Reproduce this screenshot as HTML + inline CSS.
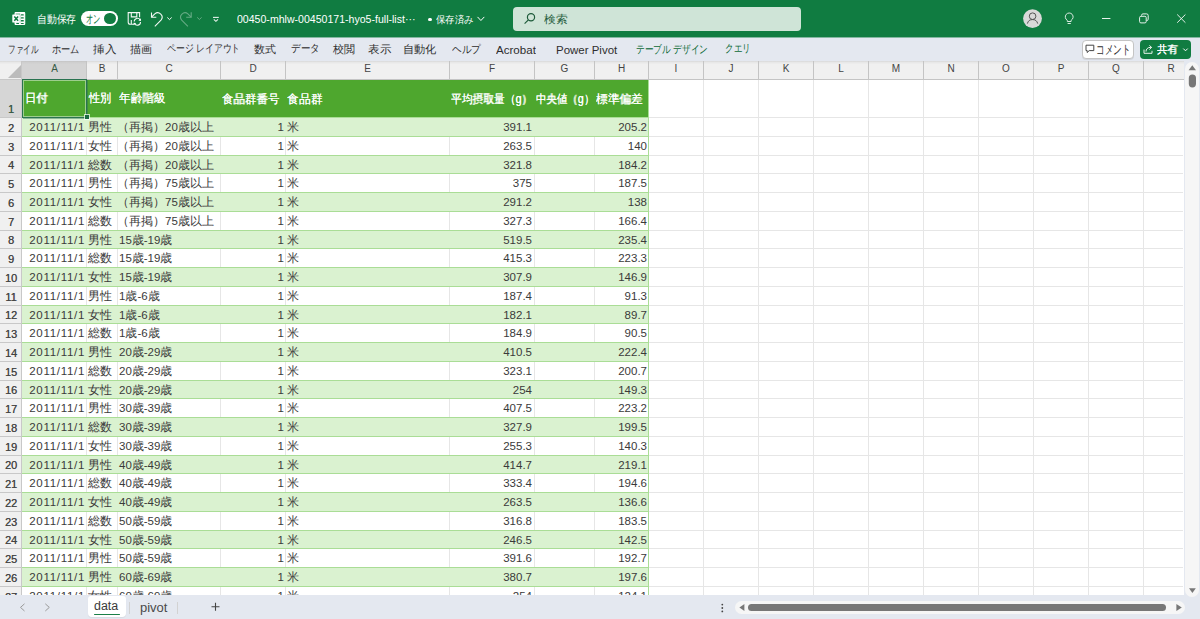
<!DOCTYPE html><html><head><meta charset="utf-8"><style>*{box-sizing:border-box;margin:0;padding:0}
html,body{width:1200px;height:619px;overflow:hidden;background:#e4e8f0;font-family:"Liberation Sans",sans-serif;position:relative}
div,span{position:absolute}
#title{left:0;top:0;width:1200px;height:37px;background:#107c41;color:#fff}
#ribbon{left:0;top:37px;width:1200px;height:24px;background:#e4e8f0;box-shadow:inset 0 1px 0 rgba(16,124,65,0.45)}
.tab{top:6px;font-size:12px;color:#404040;white-space:nowrap;line-height:14px}
.tab.g{color:#107c41}
#grid{left:0;top:0;width:1200px;height:619px}
.colhdr{background:linear-gradient(#d8d8d8 0,#e8e8e8 1.5px,#f0f0f0 3.5px);border-bottom:1px solid #c4c4c4}
.colsel{background:linear-gradient(#c4c4c4 0,#cfcfcf 1.5px,#d4d4d4 3.5px);border-bottom:1px solid #c4c4c4}
.corner{left:0;top:61px;width:22px;height:19px;background:linear-gradient(#d8d8d8 0,#e8e8e8 1.5px,#f0f0f0 3.5px);border-right:1px solid #c8c8c8;border-bottom:1px solid #c8c8c8}
.corner:after{content:"";position:absolute;right:0px;bottom:1px;width:0;height:0;border-left:13px solid transparent;border-bottom:13px solid #bcbcbc}
.cl{top:61px;height:18px;text-align:center;font-size:10px;line-height:15px;color:#444;padding-left:1px}
.cl.sel{color:#345a45}
.chl{top:61px;width:1px;height:18px;background:#c4c4c4}
.rowhdr{background:#f0f0f0;border-right:1px solid #c8c8c8}
.rowsel{background:#d6d6d6;border-right:1px solid #c8c8c8}
.rhl{left:0;width:22px;height:1px;background:#c8c8c8}
.rn{left:0;width:22px;text-align:center;font-size:11px;color:#444;text-shadow:0.3px 0 0 #666;display:flex;align-items:flex-end;justify-content:center;padding-bottom:2px;line-height:12px}
.rn.sel{color:#345a45}
.sheet{background:#fff}
.vg{width:1px;background:#e6e6e6}
.hg{left:22px;width:1161px;height:1px;background:#e6e6e6}
.thead{background:#4ea72e}
.band{background:#daf2d0}
.tb{height:1px;background:#aadd96}
.tr{width:1px;background:#aadd96}
.ht{top:79px;height:38px;color:#fff;font-weight:bold;font-size:12px;line-height:38px;padding:0 2px;white-space:nowrap}
.tt{white-space:nowrap;color:#fff}
.c{font-size:11.5px;color:#3a3a3a;white-space:nowrap;line-height:14px;padding:3px 1px 0 2px}
.c.d{letter-spacing:0.7px;padding-right:1px}
.c.p{margin-left:-2px}
.c.h{padding-right:1px}
.c.f{padding-right:2px}
.l{text-align:left}.r{text-align:right}
.selbox{left:22px;top:79px;width:65px;height:39px;border:1px solid #2a7350;box-shadow:inset 0 0 0 1px rgba(255,255,255,0.45),1px 1px 0 rgba(42,115,80,0.45)}
.handle{left:84.5px;top:115px;width:4px;height:4px;background:#1a6b40;box-shadow:0 0 0 1px rgba(255,255,255,0.7)}
#bottom{left:0;top:595px;width:1200px;height:24px;background:#e4e8f0}
</style></head><body>
<div id="title">
 <div style="left:513px;top:7px;width:288px;height:24px;background:#cfe4d7;border-radius:4px"></div>
 <svg style="position:absolute;left:0;top:0" width="1200" height="37" viewBox="0 0 1200 37">
  <!-- excel icon -->
  <rect x="15.1" y="12.6" width="9.6" height="11.9" rx="0.6" fill="none" stroke="#fff" stroke-width="1.1"/>
  <rect x="15" y="12.1" width="10" height="2.6" fill="#fff" opacity="0.55"/>
  <rect x="20.2" y="12.6" width="4.5" height="12" fill="#fff"/>
  <rect x="15" y="22.2" width="5.5" height="2.4" fill="#fff"/>
  <g fill="#107c41"><rect x="20.9" y="14.3" width="2.9" height="1.3" rx="0.5"/><rect x="20.9" y="17.2" width="2.9" height="1.3" rx="0.5"/><rect x="20.9" y="20.1" width="2.9" height="1.3" rx="0.5"/><rect x="20.9" y="22.9" width="2.9" height="1.1" rx="0.5"/><rect x="16.2" y="22.9" width="2.9" height="1.1" rx="0.5"/></g>
  <rect x="12.3" y="14.6" width="7.6" height="8" rx="0.5" fill="#fff"/>
  <path d="M14.3 16.4l3.8 4.4M18.1 16.4l-3.8 4.4" stroke="#107c41" stroke-width="1.5"/>
  <!-- save icon -->
  <g fill="none" stroke="#fff" stroke-width="1.1" opacity="0.95">
   <path d="M134 24.2h-3.8a2 2 0 0 1-2-2v-9.6h11.4v4.6"/>
   <path d="M131.3 12.6v4.3h5.5v-4.3"/>
   <path d="M131.3 24v-4"/>
   <path d="M134.2 21.5a3.2 3.2 0 0 1 6-1.5"/>
   <path d="M140.5 22a3.2 3.2 0 0 1-6 1.6"/>
  </g>
  <path d="M140.8 18.3l0.2 2.6-2.6-0.3z" fill="#fff"/>
  <path d="M133.8 25.3l-0.2-2.6 2.6 0.3z" fill="#fff"/>
  <!-- undo -->
  <g fill="none" stroke="#fff" stroke-width="1.1" opacity="0.95">
   <path d="M151.5 12.4v4.8h4.8"/>
   <path d="M151.8 16.9l3-3a4.4 4.4 0 0 1 6.2 6.2l-6.2 6.2" />
   <path d="M167.3 17.5l2.2 2.1 2.2-2.1" stroke-width="1"/>
  </g>
  <!-- redo dim -->
  <g fill="none" stroke="#fff" stroke-width="1.1" opacity="0.35">
   <path d="M191.2 12.2v5h-5"/>
   <path d="M190.9 16.9l-3-3a4.4 4.4 0 0 0 -6.2 6.2l6.2 6.2"/>
   <path d="M197.2 17.4l2.2 2.1 2.2-2.1" stroke-width="1"/>
  </g>
  <!-- customize -->
  <g fill="none" stroke="#fff" stroke-width="1.1" opacity="0.9">
   <path d="M213 17.4h5.8"/>
   <path d="M213.8 19.3l2.1 2 2.1-2"/>
  </g>
  <!-- saved chevron -->
  <path d="M477.5 16.9l3.4 3.6 3.4-3.6" fill="none" stroke="#fff" stroke-width="1"/>
  <!-- search icon -->
  <g fill="none" stroke="#1e5b3a" stroke-width="1.2"><circle cx="531" cy="17.2" r="3.6"/><path d="M528.4 19.9l-3.8 3.8"/></g>
  <!-- avatar -->
  <circle cx="1032.5" cy="18.6" r="9.4" fill="#d9d9d9"/>
  <g fill="none" stroke="#555" stroke-width="1"><circle cx="1032.6" cy="16.2" r="3.3"/><path d="M1027.4 23.6a5.3 5.3 0 0 1 10.3 0"/></g>
  <!-- lightbulb -->
  <g fill="none" stroke="#fff" stroke-width="1" opacity="0.85"><path d="M1067.3 21.5v-1.2a3.9 3.9 0 1 1 3.8 0v1.2z"/><path d="M1067.6 23.5h3.2"/></g>
  <!-- min -->
  <path d="M1102 18.5h8.4" stroke="#fff" stroke-width="1" opacity="0.9"/>
  <!-- restore -->
  <g fill="none" stroke="#fff" stroke-width="1" opacity="0.9"><rect x="1139.6" y="16.3" width="6.6" height="6.6" rx="1.3"/><path d="M1141.5 15.8v-0.4a1.5 1.5 0 0 1 1.5-1.5h3.6a1.6 1.6 0 0 1 1.6 1.6v3.6a1.5 1.5 0 0 1-1.5 1.5h-0.3"/></g>
  <!-- close -->
  <path d="M1177.2 14.5l8.2 8.2M1185.4 14.5l-8.2 8.2" stroke="#fff" stroke-width="1" opacity="0.9"/>
 </svg>
 <div style="left:81px;top:10.5px;width:37px;height:15.5px;background:#fff;border-radius:8px"><div style="left:23.2px;top:2.2px;width:11.6px;height:11px;border-radius:6px;background:#107c41"></div></div>
 <div style="left:428px;top:17.5px;width:3.5px;height:3.5px;border-radius:50%;background:#fff"></div>
</div>

<div id="ribbon">
 <div style="left:1082px;top:3px;width:52px;height:19px;background:#fff;border:1px solid #c4c4c4;border-radius:4px;box-shadow:0 1px 0 rgba(0,0,0,0.08)"></div>
 <svg style="position:absolute;left:0;top:0" width="1200" height="24" viewBox="0 37 1200 24">
  <path d="M1086 45.2h7.8v5.4h-4.6l-2 1.9v-1.9h-1.2z" fill="none" stroke="#444" stroke-width="1"/>
 </svg>
 <div style="left:1140px;top:3px;width:51px;height:19px;background:#107c41;border-radius:4px"></div>
 <svg style="position:absolute;left:0;top:0" width="1200" height="24" viewBox="0 37 1200 24">
  <g fill="none" stroke="#fff" stroke-width="1" opacity="0.9">
   <path d="M1144 49.5v3.8h8v-2.5"/>
   <path d="M1146 51.6a4 4 0 0 1 4-4.2h1.6l-2.2-2"/><path d="M1151.6 47.4l-2.2 2.1"/>
  </g>
  <path d="M1183.3 48.6l2.2 2.2 2.2-2.2" fill="none" stroke="#fff" stroke-width="1"/>
 </svg>
</div>

<div id="grid">
<div class="colhdr" style="left:0;top:61px;width:1184px;height:19px"></div>
<div class="corner"></div>
<div class="colsel" style="left:22px;top:61px;width:64px;height:19px"></div>
<div class="cl sel" style="left:22px;width:64px">A</div>
<div class="cl" style="left:86px;width:31px">B</div>
<div class="chl" style="left:86px"></div>
<div class="cl" style="left:117px;width:103px">C</div>
<div class="chl" style="left:117px"></div>
<div class="cl" style="left:220px;width:65px">D</div>
<div class="chl" style="left:220px"></div>
<div class="cl" style="left:285px;width:164px">E</div>
<div class="chl" style="left:285px"></div>
<div class="cl" style="left:449px;width:85px">F</div>
<div class="chl" style="left:449px"></div>
<div class="cl" style="left:534px;width:60px">G</div>
<div class="chl" style="left:534px"></div>
<div class="cl" style="left:594px;width:54px">H</div>
<div class="chl" style="left:594px"></div>
<div class="cl" style="left:648px;width:55px">I</div>
<div class="chl" style="left:648px"></div>
<div class="cl" style="left:703px;width:55px">J</div>
<div class="chl" style="left:703px"></div>
<div class="cl" style="left:758px;width:55px">K</div>
<div class="chl" style="left:758px"></div>
<div class="cl" style="left:813px;width:55px">L</div>
<div class="chl" style="left:813px"></div>
<div class="cl" style="left:868px;width:55px">M</div>
<div class="chl" style="left:868px"></div>
<div class="cl" style="left:923px;width:55px">N</div>
<div class="chl" style="left:923px"></div>
<div class="cl" style="left:978px;width:55px">O</div>
<div class="chl" style="left:978px"></div>
<div class="cl" style="left:1033px;width:55px">P</div>
<div class="chl" style="left:1033px"></div>
<div class="cl" style="left:1088px;width:55px">Q</div>
<div class="chl" style="left:1088px"></div>
<div class="cl" style="left:1143px;width:55px">R</div>
<div class="chl" style="left:1143px"></div>
<div class="rowhdr" style="left:0;top:80px;width:22px;height:515px"></div>
<div class="rowsel" style="left:0;top:80px;width:22px;height:37px"></div>
<div class="sheet" style="left:22px;top:80px;width:1162px;height:515px"></div>
<div class="vg" style="left:86px;top:80px;height:515px"></div>
<div class="vg" style="left:117px;top:80px;height:515px"></div>
<div class="vg" style="left:220px;top:80px;height:515px"></div>
<div class="vg" style="left:285px;top:80px;height:515px"></div>
<div class="vg" style="left:449px;top:80px;height:515px"></div>
<div class="vg" style="left:534px;top:80px;height:515px"></div>
<div class="vg" style="left:594px;top:80px;height:515px"></div>
<div class="vg" style="left:648px;top:80px;height:515px"></div>
<div class="vg" style="left:703px;top:80px;height:515px"></div>
<div class="vg" style="left:758px;top:80px;height:515px"></div>
<div class="vg" style="left:813px;top:80px;height:515px"></div>
<div class="vg" style="left:868px;top:80px;height:515px"></div>
<div class="vg" style="left:923px;top:80px;height:515px"></div>
<div class="vg" style="left:978px;top:80px;height:515px"></div>
<div class="vg" style="left:1033px;top:80px;height:515px"></div>
<div class="vg" style="left:1088px;top:80px;height:515px"></div>
<div class="vg" style="left:1143px;top:80px;height:515px"></div>
<div class="hg" style="top:117.00px"></div>
<div class="rhl" style="top:117.00px"></div>
<div class="hg" style="top:135.75px"></div>
<div class="rhl" style="top:135.75px"></div>
<div class="hg" style="top:154.50px"></div>
<div class="rhl" style="top:154.50px"></div>
<div class="hg" style="top:173.25px"></div>
<div class="rhl" style="top:173.25px"></div>
<div class="hg" style="top:192.00px"></div>
<div class="rhl" style="top:192.00px"></div>
<div class="hg" style="top:210.75px"></div>
<div class="rhl" style="top:210.75px"></div>
<div class="hg" style="top:229.50px"></div>
<div class="rhl" style="top:229.50px"></div>
<div class="hg" style="top:248.25px"></div>
<div class="rhl" style="top:248.25px"></div>
<div class="hg" style="top:267.00px"></div>
<div class="rhl" style="top:267.00px"></div>
<div class="hg" style="top:285.75px"></div>
<div class="rhl" style="top:285.75px"></div>
<div class="hg" style="top:304.50px"></div>
<div class="rhl" style="top:304.50px"></div>
<div class="hg" style="top:323.25px"></div>
<div class="rhl" style="top:323.25px"></div>
<div class="hg" style="top:342.00px"></div>
<div class="rhl" style="top:342.00px"></div>
<div class="hg" style="top:360.75px"></div>
<div class="rhl" style="top:360.75px"></div>
<div class="hg" style="top:379.50px"></div>
<div class="rhl" style="top:379.50px"></div>
<div class="hg" style="top:398.25px"></div>
<div class="rhl" style="top:398.25px"></div>
<div class="hg" style="top:417.00px"></div>
<div class="rhl" style="top:417.00px"></div>
<div class="hg" style="top:435.75px"></div>
<div class="rhl" style="top:435.75px"></div>
<div class="hg" style="top:454.50px"></div>
<div class="rhl" style="top:454.50px"></div>
<div class="hg" style="top:473.25px"></div>
<div class="rhl" style="top:473.25px"></div>
<div class="hg" style="top:492.00px"></div>
<div class="rhl" style="top:492.00px"></div>
<div class="hg" style="top:510.75px"></div>
<div class="rhl" style="top:510.75px"></div>
<div class="hg" style="top:529.50px"></div>
<div class="rhl" style="top:529.50px"></div>
<div class="hg" style="top:548.25px"></div>
<div class="rhl" style="top:548.25px"></div>
<div class="hg" style="top:567.00px"></div>
<div class="rhl" style="top:567.00px"></div>
<div class="hg" style="top:585.75px"></div>
<div class="rhl" style="top:585.75px"></div>
<div class="rn sel" style="top:80px;height:37px">1</div>
<div class="rn" style="top:117.00px;height:18.75px">2</div>
<div class="rn" style="top:135.75px;height:18.75px">3</div>
<div class="rn" style="top:154.50px;height:18.75px">4</div>
<div class="rn" style="top:173.25px;height:18.75px">5</div>
<div class="rn" style="top:192.00px;height:18.75px">6</div>
<div class="rn" style="top:210.75px;height:18.75px">7</div>
<div class="rn" style="top:229.50px;height:18.75px">8</div>
<div class="rn" style="top:248.25px;height:18.75px">9</div>
<div class="rn" style="top:267.00px;height:18.75px">10</div>
<div class="rn" style="top:285.75px;height:18.75px">11</div>
<div class="rn" style="top:304.50px;height:18.75px">12</div>
<div class="rn" style="top:323.25px;height:18.75px">13</div>
<div class="rn" style="top:342.00px;height:18.75px">14</div>
<div class="rn" style="top:360.75px;height:18.75px">15</div>
<div class="rn" style="top:379.50px;height:18.75px">16</div>
<div class="rn" style="top:398.25px;height:18.75px">17</div>
<div class="rn" style="top:417.00px;height:18.75px">18</div>
<div class="rn" style="top:435.75px;height:18.75px">19</div>
<div class="rn" style="top:454.50px;height:18.75px">20</div>
<div class="rn" style="top:473.25px;height:18.75px">21</div>
<div class="rn" style="top:492.00px;height:18.75px">22</div>
<div class="rn" style="top:510.75px;height:18.75px">23</div>
<div class="rn" style="top:529.50px;height:18.75px">24</div>
<div class="rn" style="top:548.25px;height:18.75px">25</div>
<div class="rn" style="top:567.00px;height:18.75px">26</div>
<div class="rn" style="top:585.75px;height:18.75px">27</div>
<div class="thead" style="left:22px;top:80px;width:626px;height:37px"></div>
<div class="band" style="left:22px;top:117.00px;width:626px;height:18.75px"></div>
<div class="band" style="left:22px;top:154.50px;width:626px;height:18.75px"></div>
<div class="band" style="left:22px;top:192.00px;width:626px;height:18.75px"></div>
<div class="band" style="left:22px;top:229.50px;width:626px;height:18.75px"></div>
<div class="band" style="left:22px;top:267.00px;width:626px;height:18.75px"></div>
<div class="band" style="left:22px;top:304.50px;width:626px;height:18.75px"></div>
<div class="band" style="left:22px;top:342.00px;width:626px;height:18.75px"></div>
<div class="band" style="left:22px;top:379.50px;width:626px;height:18.75px"></div>
<div class="band" style="left:22px;top:417.00px;width:626px;height:18.75px"></div>
<div class="band" style="left:22px;top:454.50px;width:626px;height:18.75px"></div>
<div class="band" style="left:22px;top:492.00px;width:626px;height:18.75px"></div>
<div class="band" style="left:22px;top:529.50px;width:626px;height:18.75px"></div>
<div class="band" style="left:22px;top:567.00px;width:626px;height:18.75px"></div>
<div class="tb" style="left:22px;top:117.00px;width:626px"></div>
<div class="tb" style="left:22px;top:135.75px;width:626px"></div>
<div class="tb" style="left:22px;top:154.50px;width:626px"></div>
<div class="tb" style="left:22px;top:173.25px;width:626px"></div>
<div class="tb" style="left:22px;top:192.00px;width:626px"></div>
<div class="tb" style="left:22px;top:210.75px;width:626px"></div>
<div class="tb" style="left:22px;top:229.50px;width:626px"></div>
<div class="tb" style="left:22px;top:248.25px;width:626px"></div>
<div class="tb" style="left:22px;top:267.00px;width:626px"></div>
<div class="tb" style="left:22px;top:285.75px;width:626px"></div>
<div class="tb" style="left:22px;top:304.50px;width:626px"></div>
<div class="tb" style="left:22px;top:323.25px;width:626px"></div>
<div class="tb" style="left:22px;top:342.00px;width:626px"></div>
<div class="tb" style="left:22px;top:360.75px;width:626px"></div>
<div class="tb" style="left:22px;top:379.50px;width:626px"></div>
<div class="tb" style="left:22px;top:398.25px;width:626px"></div>
<div class="tb" style="left:22px;top:417.00px;width:626px"></div>
<div class="tb" style="left:22px;top:435.75px;width:626px"></div>
<div class="tb" style="left:22px;top:454.50px;width:626px"></div>
<div class="tb" style="left:22px;top:473.25px;width:626px"></div>
<div class="tb" style="left:22px;top:492.00px;width:626px"></div>
<div class="tb" style="left:22px;top:510.75px;width:626px"></div>
<div class="tb" style="left:22px;top:529.50px;width:626px"></div>
<div class="tb" style="left:22px;top:548.25px;width:626px"></div>
<div class="tb" style="left:22px;top:567.00px;width:626px"></div>
<div class="tb" style="left:22px;top:585.75px;width:626px"></div>
<div class="tb" style="left:22px;top:604.50px;width:626px"></div>
<div class="tr" style="left:648px;top:80px;height:515px"></div>
<div class="c r d" style="right:1114px;top:117.00px;height:18.75px">2011/11/1</div>
<div class="c l" style="left:86px;top:117.00px;height:18.75px">男性</div>
<div class="c l p" style="left:117px;top:117.00px;height:18.75px">（再掲）20歳以上</div>
<div class="c r" style="right:915px;top:117.00px;height:18.75px">1</div>
<div class="c l" style="left:285px;top:117.00px;height:18.75px">米</div>
<div class="c r f" style="right:666px;top:117.00px;height:18.75px">391.1</div>
<div class="c r h" style="right:552px;top:117.00px;height:18.75px">205.2</div>
<div class="c r d" style="right:1114px;top:135.75px;height:18.75px">2011/11/1</div>
<div class="c l" style="left:86px;top:135.75px;height:18.75px">女性</div>
<div class="c l p" style="left:117px;top:135.75px;height:18.75px">（再掲）20歳以上</div>
<div class="c r" style="right:915px;top:135.75px;height:18.75px">1</div>
<div class="c l" style="left:285px;top:135.75px;height:18.75px">米</div>
<div class="c r f" style="right:666px;top:135.75px;height:18.75px">263.5</div>
<div class="c r h" style="right:552px;top:135.75px;height:18.75px">140</div>
<div class="c r d" style="right:1114px;top:154.50px;height:18.75px">2011/11/1</div>
<div class="c l" style="left:86px;top:154.50px;height:18.75px">総数</div>
<div class="c l p" style="left:117px;top:154.50px;height:18.75px">（再掲）20歳以上</div>
<div class="c r" style="right:915px;top:154.50px;height:18.75px">1</div>
<div class="c l" style="left:285px;top:154.50px;height:18.75px">米</div>
<div class="c r f" style="right:666px;top:154.50px;height:18.75px">321.8</div>
<div class="c r h" style="right:552px;top:154.50px;height:18.75px">184.2</div>
<div class="c r d" style="right:1114px;top:173.25px;height:18.75px">2011/11/1</div>
<div class="c l" style="left:86px;top:173.25px;height:18.75px">男性</div>
<div class="c l p" style="left:117px;top:173.25px;height:18.75px">（再掲）75歳以上</div>
<div class="c r" style="right:915px;top:173.25px;height:18.75px">1</div>
<div class="c l" style="left:285px;top:173.25px;height:18.75px">米</div>
<div class="c r f" style="right:666px;top:173.25px;height:18.75px">375</div>
<div class="c r h" style="right:552px;top:173.25px;height:18.75px">187.5</div>
<div class="c r d" style="right:1114px;top:192.00px;height:18.75px">2011/11/1</div>
<div class="c l" style="left:86px;top:192.00px;height:18.75px">女性</div>
<div class="c l p" style="left:117px;top:192.00px;height:18.75px">（再掲）75歳以上</div>
<div class="c r" style="right:915px;top:192.00px;height:18.75px">1</div>
<div class="c l" style="left:285px;top:192.00px;height:18.75px">米</div>
<div class="c r f" style="right:666px;top:192.00px;height:18.75px">291.2</div>
<div class="c r h" style="right:552px;top:192.00px;height:18.75px">138</div>
<div class="c r d" style="right:1114px;top:210.75px;height:18.75px">2011/11/1</div>
<div class="c l" style="left:86px;top:210.75px;height:18.75px">総数</div>
<div class="c l p" style="left:117px;top:210.75px;height:18.75px">（再掲）75歳以上</div>
<div class="c r" style="right:915px;top:210.75px;height:18.75px">1</div>
<div class="c l" style="left:285px;top:210.75px;height:18.75px">米</div>
<div class="c r f" style="right:666px;top:210.75px;height:18.75px">327.3</div>
<div class="c r h" style="right:552px;top:210.75px;height:18.75px">166.4</div>
<div class="c r d" style="right:1114px;top:229.50px;height:18.75px">2011/11/1</div>
<div class="c l" style="left:86px;top:229.50px;height:18.75px">男性</div>
<div class="c l" style="left:117px;top:229.50px;height:18.75px">15歳-19歳</div>
<div class="c r" style="right:915px;top:229.50px;height:18.75px">1</div>
<div class="c l" style="left:285px;top:229.50px;height:18.75px">米</div>
<div class="c r f" style="right:666px;top:229.50px;height:18.75px">519.5</div>
<div class="c r h" style="right:552px;top:229.50px;height:18.75px">235.4</div>
<div class="c r d" style="right:1114px;top:248.25px;height:18.75px">2011/11/1</div>
<div class="c l" style="left:86px;top:248.25px;height:18.75px">総数</div>
<div class="c l" style="left:117px;top:248.25px;height:18.75px">15歳-19歳</div>
<div class="c r" style="right:915px;top:248.25px;height:18.75px">1</div>
<div class="c l" style="left:285px;top:248.25px;height:18.75px">米</div>
<div class="c r f" style="right:666px;top:248.25px;height:18.75px">415.3</div>
<div class="c r h" style="right:552px;top:248.25px;height:18.75px">223.3</div>
<div class="c r d" style="right:1114px;top:267.00px;height:18.75px">2011/11/1</div>
<div class="c l" style="left:86px;top:267.00px;height:18.75px">女性</div>
<div class="c l" style="left:117px;top:267.00px;height:18.75px">15歳-19歳</div>
<div class="c r" style="right:915px;top:267.00px;height:18.75px">1</div>
<div class="c l" style="left:285px;top:267.00px;height:18.75px">米</div>
<div class="c r f" style="right:666px;top:267.00px;height:18.75px">307.9</div>
<div class="c r h" style="right:552px;top:267.00px;height:18.75px">146.9</div>
<div class="c r d" style="right:1114px;top:285.75px;height:18.75px">2011/11/1</div>
<div class="c l" style="left:86px;top:285.75px;height:18.75px">男性</div>
<div class="c l" style="left:117px;top:285.75px;height:18.75px">1歳-6歳</div>
<div class="c r" style="right:915px;top:285.75px;height:18.75px">1</div>
<div class="c l" style="left:285px;top:285.75px;height:18.75px">米</div>
<div class="c r f" style="right:666px;top:285.75px;height:18.75px">187.4</div>
<div class="c r h" style="right:552px;top:285.75px;height:18.75px">91.3</div>
<div class="c r d" style="right:1114px;top:304.50px;height:18.75px">2011/11/1</div>
<div class="c l" style="left:86px;top:304.50px;height:18.75px">女性</div>
<div class="c l" style="left:117px;top:304.50px;height:18.75px">1歳-6歳</div>
<div class="c r" style="right:915px;top:304.50px;height:18.75px">1</div>
<div class="c l" style="left:285px;top:304.50px;height:18.75px">米</div>
<div class="c r f" style="right:666px;top:304.50px;height:18.75px">182.1</div>
<div class="c r h" style="right:552px;top:304.50px;height:18.75px">89.7</div>
<div class="c r d" style="right:1114px;top:323.25px;height:18.75px">2011/11/1</div>
<div class="c l" style="left:86px;top:323.25px;height:18.75px">総数</div>
<div class="c l" style="left:117px;top:323.25px;height:18.75px">1歳-6歳</div>
<div class="c r" style="right:915px;top:323.25px;height:18.75px">1</div>
<div class="c l" style="left:285px;top:323.25px;height:18.75px">米</div>
<div class="c r f" style="right:666px;top:323.25px;height:18.75px">184.9</div>
<div class="c r h" style="right:552px;top:323.25px;height:18.75px">90.5</div>
<div class="c r d" style="right:1114px;top:342.00px;height:18.75px">2011/11/1</div>
<div class="c l" style="left:86px;top:342.00px;height:18.75px">男性</div>
<div class="c l" style="left:117px;top:342.00px;height:18.75px">20歳-29歳</div>
<div class="c r" style="right:915px;top:342.00px;height:18.75px">1</div>
<div class="c l" style="left:285px;top:342.00px;height:18.75px">米</div>
<div class="c r f" style="right:666px;top:342.00px;height:18.75px">410.5</div>
<div class="c r h" style="right:552px;top:342.00px;height:18.75px">222.4</div>
<div class="c r d" style="right:1114px;top:360.75px;height:18.75px">2011/11/1</div>
<div class="c l" style="left:86px;top:360.75px;height:18.75px">総数</div>
<div class="c l" style="left:117px;top:360.75px;height:18.75px">20歳-29歳</div>
<div class="c r" style="right:915px;top:360.75px;height:18.75px">1</div>
<div class="c l" style="left:285px;top:360.75px;height:18.75px">米</div>
<div class="c r f" style="right:666px;top:360.75px;height:18.75px">323.1</div>
<div class="c r h" style="right:552px;top:360.75px;height:18.75px">200.7</div>
<div class="c r d" style="right:1114px;top:379.50px;height:18.75px">2011/11/1</div>
<div class="c l" style="left:86px;top:379.50px;height:18.75px">女性</div>
<div class="c l" style="left:117px;top:379.50px;height:18.75px">20歳-29歳</div>
<div class="c r" style="right:915px;top:379.50px;height:18.75px">1</div>
<div class="c l" style="left:285px;top:379.50px;height:18.75px">米</div>
<div class="c r f" style="right:666px;top:379.50px;height:18.75px">254</div>
<div class="c r h" style="right:552px;top:379.50px;height:18.75px">149.3</div>
<div class="c r d" style="right:1114px;top:398.25px;height:18.75px">2011/11/1</div>
<div class="c l" style="left:86px;top:398.25px;height:18.75px">男性</div>
<div class="c l" style="left:117px;top:398.25px;height:18.75px">30歳-39歳</div>
<div class="c r" style="right:915px;top:398.25px;height:18.75px">1</div>
<div class="c l" style="left:285px;top:398.25px;height:18.75px">米</div>
<div class="c r f" style="right:666px;top:398.25px;height:18.75px">407.5</div>
<div class="c r h" style="right:552px;top:398.25px;height:18.75px">223.2</div>
<div class="c r d" style="right:1114px;top:417.00px;height:18.75px">2011/11/1</div>
<div class="c l" style="left:86px;top:417.00px;height:18.75px">総数</div>
<div class="c l" style="left:117px;top:417.00px;height:18.75px">30歳-39歳</div>
<div class="c r" style="right:915px;top:417.00px;height:18.75px">1</div>
<div class="c l" style="left:285px;top:417.00px;height:18.75px">米</div>
<div class="c r f" style="right:666px;top:417.00px;height:18.75px">327.9</div>
<div class="c r h" style="right:552px;top:417.00px;height:18.75px">199.5</div>
<div class="c r d" style="right:1114px;top:435.75px;height:18.75px">2011/11/1</div>
<div class="c l" style="left:86px;top:435.75px;height:18.75px">女性</div>
<div class="c l" style="left:117px;top:435.75px;height:18.75px">30歳-39歳</div>
<div class="c r" style="right:915px;top:435.75px;height:18.75px">1</div>
<div class="c l" style="left:285px;top:435.75px;height:18.75px">米</div>
<div class="c r f" style="right:666px;top:435.75px;height:18.75px">255.3</div>
<div class="c r h" style="right:552px;top:435.75px;height:18.75px">140.3</div>
<div class="c r d" style="right:1114px;top:454.50px;height:18.75px">2011/11/1</div>
<div class="c l" style="left:86px;top:454.50px;height:18.75px">男性</div>
<div class="c l" style="left:117px;top:454.50px;height:18.75px">40歳-49歳</div>
<div class="c r" style="right:915px;top:454.50px;height:18.75px">1</div>
<div class="c l" style="left:285px;top:454.50px;height:18.75px">米</div>
<div class="c r f" style="right:666px;top:454.50px;height:18.75px">414.7</div>
<div class="c r h" style="right:552px;top:454.50px;height:18.75px">219.1</div>
<div class="c r d" style="right:1114px;top:473.25px;height:18.75px">2011/11/1</div>
<div class="c l" style="left:86px;top:473.25px;height:18.75px">総数</div>
<div class="c l" style="left:117px;top:473.25px;height:18.75px">40歳-49歳</div>
<div class="c r" style="right:915px;top:473.25px;height:18.75px">1</div>
<div class="c l" style="left:285px;top:473.25px;height:18.75px">米</div>
<div class="c r f" style="right:666px;top:473.25px;height:18.75px">333.4</div>
<div class="c r h" style="right:552px;top:473.25px;height:18.75px">194.6</div>
<div class="c r d" style="right:1114px;top:492.00px;height:18.75px">2011/11/1</div>
<div class="c l" style="left:86px;top:492.00px;height:18.75px">女性</div>
<div class="c l" style="left:117px;top:492.00px;height:18.75px">40歳-49歳</div>
<div class="c r" style="right:915px;top:492.00px;height:18.75px">1</div>
<div class="c l" style="left:285px;top:492.00px;height:18.75px">米</div>
<div class="c r f" style="right:666px;top:492.00px;height:18.75px">263.5</div>
<div class="c r h" style="right:552px;top:492.00px;height:18.75px">136.6</div>
<div class="c r d" style="right:1114px;top:510.75px;height:18.75px">2011/11/1</div>
<div class="c l" style="left:86px;top:510.75px;height:18.75px">総数</div>
<div class="c l" style="left:117px;top:510.75px;height:18.75px">50歳-59歳</div>
<div class="c r" style="right:915px;top:510.75px;height:18.75px">1</div>
<div class="c l" style="left:285px;top:510.75px;height:18.75px">米</div>
<div class="c r f" style="right:666px;top:510.75px;height:18.75px">316.8</div>
<div class="c r h" style="right:552px;top:510.75px;height:18.75px">183.5</div>
<div class="c r d" style="right:1114px;top:529.50px;height:18.75px">2011/11/1</div>
<div class="c l" style="left:86px;top:529.50px;height:18.75px">女性</div>
<div class="c l" style="left:117px;top:529.50px;height:18.75px">50歳-59歳</div>
<div class="c r" style="right:915px;top:529.50px;height:18.75px">1</div>
<div class="c l" style="left:285px;top:529.50px;height:18.75px">米</div>
<div class="c r f" style="right:666px;top:529.50px;height:18.75px">246.5</div>
<div class="c r h" style="right:552px;top:529.50px;height:18.75px">142.5</div>
<div class="c r d" style="right:1114px;top:548.25px;height:18.75px">2011/11/1</div>
<div class="c l" style="left:86px;top:548.25px;height:18.75px">男性</div>
<div class="c l" style="left:117px;top:548.25px;height:18.75px">50歳-59歳</div>
<div class="c r" style="right:915px;top:548.25px;height:18.75px">1</div>
<div class="c l" style="left:285px;top:548.25px;height:18.75px">米</div>
<div class="c r f" style="right:666px;top:548.25px;height:18.75px">391.6</div>
<div class="c r h" style="right:552px;top:548.25px;height:18.75px">192.7</div>
<div class="c r d" style="right:1114px;top:567.00px;height:18.75px">2011/11/1</div>
<div class="c l" style="left:86px;top:567.00px;height:18.75px">男性</div>
<div class="c l" style="left:117px;top:567.00px;height:18.75px">60歳-69歳</div>
<div class="c r" style="right:915px;top:567.00px;height:18.75px">1</div>
<div class="c l" style="left:285px;top:567.00px;height:18.75px">米</div>
<div class="c r f" style="right:666px;top:567.00px;height:18.75px">380.7</div>
<div class="c r h" style="right:552px;top:567.00px;height:18.75px">197.6</div>
<div class="c r d" style="right:1114px;top:585.75px;height:18.75px">2011/11/1</div>
<div class="c l" style="left:86px;top:585.75px;height:18.75px">女性</div>
<div class="c l" style="left:117px;top:585.75px;height:18.75px">60歳-69歳</div>
<div class="c r" style="right:915px;top:585.75px;height:18.75px">1</div>
<div class="c l" style="left:285px;top:585.75px;height:18.75px">米</div>
<div class="c r f" style="right:666px;top:585.75px;height:18.75px">254</div>
<div class="c r h" style="right:552px;top:585.75px;height:18.75px">124.1</div>
<div class="selbox"></div><div class="handle"></div>
</div>
<div id="bottom">
 <svg style="position:absolute;left:0;top:0" width="1200" height="24" viewBox="0 595 1200 24">
  <path d="M24.5 603.8l-4 3.6 4 3.6" fill="none" stroke="#9a9a9a" stroke-width="1"/>
  <path d="M45.3 603.8l4 3.6-4 3.6" fill="none" stroke="#9a9a9a" stroke-width="1"/>
  <path d="M211.5 606.7h8M215.5 602.7v8" stroke="#444" stroke-width="1.1"/>
  <g fill="#444"><circle cx="722.3" cy="604.6" r="0.9"/><circle cx="722.3" cy="608" r="0.9"/><circle cx="722.3" cy="611.4" r="0.9"/></g>
  <rect x="129" y="602" width="1" height="12" fill="#d2d2d2"/>
  <rect x="177" y="602" width="1" height="12" fill="#d2d2d2"/>
 </svg>
 <div style="left:88px;top:0.5px;width:38px;height:21.5px;background:#fff;border-radius:3px 3px 4px 4px;box-shadow:0 1px 1px rgba(0,0,0,0.06)"></div>
 <div style="left:94.3px;top:18.8px;width:25.5px;height:1.6px;background:#1a8048;border-radius:1px"></div>
</div>

<div style="left:1185px;top:62px;width:14px;height:535px;background:#f6f6f6;border-radius:7px"></div>
<svg style="position:absolute;left:0;top:0" width="1200" height="619" viewBox="0 0 1200 619">
 <path d="M1188.6 70.2l3.7-4.9 3.7 4.9z" fill="#777"/>
 <rect x="1188.8" y="74.4" width="7.2" height="13" rx="3.6" fill="#777"/>
 <path d="M1189 588.3l3.4 4.7 3.4-4.7z" fill="#777"/>
 <rect x="735" y="601" width="450" height="13" rx="6.5" fill="#f6f6f6"/>
 <path d="M744.4 604l-5 3.5 5 3.5z" fill="#777"/>
 <rect x="748" y="604" width="418" height="7" rx="3.5" fill="#777"/>
 <path d="M1176.4 604l5.4 3.5-5.4 3.5z" fill="#777"/>
</svg>

<span style="left:36.96px;transform:scaleX(0.8939);transform-origin:0 0;line-height:20px;white-space:nowrap;font-size:11px;color:#fff;top:9.20px">自動保存</span>
<span style="left:86.10px;transform:scaleX(0.6045);transform-origin:0 0;line-height:20px;white-space:nowrap;font-size:11.5px;color:#107c41;top:9.20px">オン</span>
<span style="left:237.34px;transform:scaleX(0.9603);transform-origin:0 0;line-height:20px;white-space:nowrap;font-size:11px;color:#fff;top:8.60px">00450-mhlw-00450171-hyo5-full-list···</span>
<span style="left:436.06px;transform:scaleX(0.9395);transform-origin:0 0;line-height:20px;white-space:nowrap;font-size:9.5px;color:#fff;top:9.80px">保存済み</span>
<span style="left:544.23px;transform:scaleX(1.0700);transform-origin:0 0;line-height:20px;white-space:nowrap;font-size:11px;color:#1e5b3a;top:8.70px">検索</span>
<span style="left:7.62px;transform:scaleX(0.6905);transform-origin:0 0;line-height:20px;white-space:nowrap;font-size:11px;color:#2e2e2e;top:38.50px">ファイル</span>
<span style="left:52.16px;transform:scaleX(0.8387);transform-origin:0 0;line-height:20px;white-space:nowrap;font-size:11px;color:#2e2e2e;top:38.50px">ホーム</span>
<span style="left:93.05px;transform:scaleX(1.0500);transform-origin:0 0;line-height:20px;white-space:nowrap;font-size:11px;color:#2e2e2e;top:38.80px">挿入</span>
<span style="left:130.09px;transform:scaleX(1.0100);transform-origin:0 0;line-height:20px;white-space:nowrap;font-size:11px;color:#2e2e2e;top:39.00px">描画</span>
<span style="left:167.20px;transform:scaleX(0.8046);transform-origin:0 0;line-height:20px;white-space:nowrap;font-size:11px;color:#2e2e2e;top:38.20px">ページ レイアウト</span>
<span style="left:254.00px;transform:scaleX(1.0000);transform-origin:0 0;line-height:20px;white-space:nowrap;font-size:11px;color:#2e2e2e;top:38.80px">数式</span>
<span style="left:291.13px;transform:scaleX(0.8667);transform-origin:0 0;line-height:20px;white-space:nowrap;font-size:11px;color:#2e2e2e;top:38.20px">データ</span>
<span style="left:333.00px;transform:scaleX(1.0000);transform-origin:0 0;line-height:20px;white-space:nowrap;font-size:11px;color:#2e2e2e;top:38.80px">校閲</span>
<span style="left:367.95px;transform:scaleX(1.0500);transform-origin:0 0;line-height:20px;white-space:nowrap;font-size:11px;color:#2e2e2e;top:39.00px">表示</span>
<span style="left:403.47px;transform:scaleX(1.0161);transform-origin:0 0;line-height:20px;white-space:nowrap;font-size:11px;color:#2e2e2e;top:38.80px">自動化</span>
<span style="left:452.02px;transform:scaleX(0.8767);transform-origin:0 0;line-height:20px;white-space:nowrap;font-size:11px;color:#2e2e2e;top:39.30px">ヘルプ</span>
<span style="left:496.00px;transform:scaleX(1.0526);transform-origin:0 0;line-height:20px;white-space:nowrap;font-size:11px;color:#2e2e2e;top:39.50px">Acrobat</span>
<span style="left:555.96px;transform:scaleX(1.0431);transform-origin:0 0;line-height:20px;white-space:nowrap;font-size:11px;color:#2e2e2e;top:39.50px">Power Pivot</span>
<span style="left:636.21px;transform:scaleX(0.7921);transform-origin:0 0;line-height:20px;white-space:nowrap;font-size:11px;color:#0b6a36;top:38.80px">テーブル デザイン</span>
<span style="left:725.45px;transform:scaleX(0.7768);transform-origin:0 0;line-height:20px;white-space:nowrap;font-size:11px;color:#0b6a36;top:38.20px">クエリ</span>
<span style="left:1095.98px;transform:scaleX(0.6596);transform-origin:0 0;line-height:20px;white-space:nowrap;font-size:12.5px;color:#2e2e2e;top:39.80px">コメント</span>
<span style="left:1156.80px;transform:scaleX(0.9476);transform-origin:0 0;line-height:20px;white-space:nowrap;font-size:11px;text-shadow:0.3px 0 0 #fff;color:#fff;top:39.00px">共有</span>
<span style="left:24.80px;transform:scaleX(0.9524);transform-origin:0 0;line-height:20px;white-space:nowrap;font-size:12px;text-shadow:0.35px 0 0 #fff;color:#fff;top:88.30px">日付</span>
<span style="left:89.30px;transform:scaleX(0.9304);transform-origin:0 0;line-height:20px;white-space:nowrap;font-size:12px;text-shadow:0.35px 0 0 #fff;color:#fff;top:88.30px">性別</span>
<span style="left:119.33px;transform:scaleX(0.9652);transform-origin:0 0;line-height:20px;white-space:nowrap;font-size:12px;text-shadow:0.35px 0 0 #fff;color:#fff;top:88.30px">年齢階級</span>
<span style="left:222.34px;transform:scaleX(0.9552);transform-origin:0 0;line-height:20px;white-space:nowrap;font-size:12px;text-shadow:0.35px 0 0 #fff;color:#fff;top:89.30px">食品群番号</span>
<span style="left:287.32px;transform:scaleX(0.9824);transform-origin:0 0;line-height:20px;white-space:nowrap;font-size:12px;text-shadow:0.35px 0 0 #fff;color:#fff;top:89.00px">食品群</span>
<span style="left:451.00px;transform:scaleX(0.8951);transform-origin:0 0;line-height:20px;white-space:nowrap;font-size:12px;text-shadow:0.35px 0 0 #fff;color:#fff;top:89.30px">平均摂取量（g）</span>
<span style="left:536.33px;transform:scaleX(0.8707);transform-origin:0 0;line-height:20px;white-space:nowrap;font-size:12px;text-shadow:0.35px 0 0 #fff;color:#fff;top:89.30px">中央値（g）</span>
<span style="left:595.92px;transform:scaleX(0.9761);transform-origin:0 0;line-height:20px;white-space:nowrap;font-size:12px;text-shadow:0.35px 0 0 #fff;color:#fff;top:89.30px">標準偏差</span>
<span style="left:94.26px;transform:scaleX(1.0364);transform-origin:0 0;line-height:20px;white-space:nowrap;font-size:12px;color:#3a3a3a;top:595.80px">data</span>
<span style="left:139.72px;transform:scaleX(1.0833);transform-origin:0 0;line-height:20px;white-space:nowrap;font-size:12px;color:#4a4a4a;top:598.30px">pivot</span>
</body></html>
